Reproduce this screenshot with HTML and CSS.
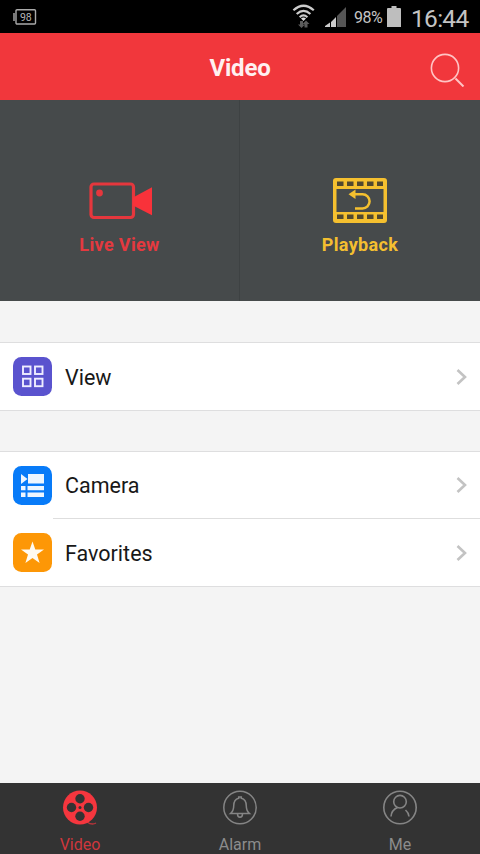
FILE: index.html
```html
<!DOCTYPE html>
<html lang="en">
<head>
<meta charset="utf-8">
<title>Video</title>
<link rel="stylesheet" href="styles.css">
</head>
<body>
<div class="status">
  <svg class="battery-left" width="24" height="18" viewBox="0 0 24 18"><rect x="3" y="1.700" width="19.500" height="14.300" rx="1" fill="none" stroke="#aaa" stroke-width="1.400"/><path d="M1 5v8" stroke="#999" stroke-width="1.600"/><text x="12.800" y="12.800" text-anchor="middle" class="tiny">98</text></svg>
  <svg class="wifi" width="24" height="26" viewBox="0 0 24 26"><g fill="none" stroke="#ccc" stroke-width="2.200"><path d="M1.400 6.300Q11.500-2.800 21.800 6.300"/><path d="M4.700 10Q11.500 3.800 18.400 10"/><path d="M7.700 13.200Q11.500 9.700 15.400 13.200"/></g><path d="M9 14.500q2.500-2 5 0L11.500 17z" fill="#ddd"/><path d="M9.500 24L6 20.500h2V17h3v3.500h2zM14 16.500l3.500 3.500h-2v3.500h-3V20h-2z" fill="#5c5c5c"/></svg>
  <svg class="signal" width="22" height="22" viewBox="0 0 22 22"><path d="M12 10l9-9v20h-9z" fill="#555"/><path d="M0 21v-1l5-3.500V21zM6 21v-5l5-5v10z" fill="#ccc"/></svg>
  <span class="percent">98%</span>
  <svg class="battery" width="14" height="22" viewBox="0 0 14 22"><path d="M4.500 0h5v2H13q1 0 1 1v18H0V3q0-1 1-1h3.500z" fill="#bebebe"/></svg>
  <span class="clock">16:44</span>
</div>
<header class="header">
  <h1>Video</h1>
  <svg class="search" width="36" height="36" viewBox="0 0 36 36"><g fill="none" stroke="#ffc4c4" stroke-width="1.600"><circle cx="16" cy="17" r="13.600"/><path d="M26.500 27.500l8 8" stroke-width="2"/></g></svg>
</header>
<section class="hero">
  <div class="tile live">
    <svg width="66" height="46" viewBox="0 0 66 46"><rect x="4" y="7" width="42.500" height="33.500" rx="3" fill="none" stroke="#e5373d" stroke-width="3.200"/><circle cx="12.500" cy="16" r="3.400" fill="#e5373d"/><path d="M46 20.500L65 10.300v28L46 28.500z" fill="#f9323a"/></svg>
    <span>Live View</span>
  </div>
  <div class="tile playback">
    <svg width="54" height="46" viewBox="0 0 54 46"><path d="M3 1h48q3 0 3 3v39q0 3-3 3H3q-3 0-3-3V4q0-3 3-3z" fill="#f5c02f"/><path d="M3.500 12h47v23h-47z" fill="#464a4b"/><path d="M4 4.500h6.500V9H4zM14 4.500h6.500V9H14zM24 4.500h6.500V9H24zM34 4.500h6.500V9H34zM44 4.500h6V9h-6zM4 37.500h6.500V42H4zM14 37.500h6.500V42H14zM24 37.500h6.500V42H24zM34 37.500h6.500V42H34zM44 37.500h6V42h-6z" fill="#51482f"/><path d="M20 17.200h9.500a7.100 7.100 0 0 1 0 14.200H22" fill="none" stroke="#f5c02f" stroke-width="2.500"/><path d="M15.500 17.200l7-4.700v9.400z" fill="#f5c02f"/></svg>
    <span>Playback</span>
  </div>
</section>
<main class="content">
  <div class="group">
    <div class="row single">
      <svg class="icon" width="39" height="39" viewBox="0 0 39 39"><rect width="39" height="39" rx="8.500" fill="#5a53ce"/><g fill="none" stroke="#eeedff" stroke-width="1.900"><rect x="10" y="9.500" width="7.500" height="7.500"/><rect x="22" y="9.500" width="7.500" height="7.500"/><rect x="10" y="21.700" width="7.500" height="7.500"/><rect x="22" y="21.700" width="7.500" height="7.500"/></g></svg>
      <div class="label">View<svg class="chevron" width="11" height="16" viewBox="0 0 11 16"><path d="M1.500 1l7.500 7-7.500 7"/></svg></div>
    </div>
  </div>
  <div class="group">
    <div class="row">
      <svg class="icon" width="39" height="39" viewBox="0 0 39 39"><rect width="39" height="39" rx="8.500" fill="#087bf8"/><path d="M8 8l6.500 5L8 18zM15 8h16v9.500H15zM8 20h4.500v4.200H8zM14.500 20H31v4.200H14.500zM8 26.500h4.500V31H8zM14.500 26.500H31V31H14.500z" fill="#edf6ff"/></svg>
      <div class="label">Camera<svg class="chevron" width="11" height="16" viewBox="0 0 11 16"><path d="M1.500 1l7.500 7-7.500 7"/></svg></div>
    </div>
    <div class="row">
      <svg class="icon" width="39" height="39" viewBox="0 0 39 39"><rect width="39" height="39" rx="8.500" fill="#fd9706"/><path d="M19.500 8.500l2.800 8H31l-7 5 2.600 8.600-7.100-5.200-7.100 5.200 2.600-8.600-7-5h8.700z" fill="#fffaf0"/></svg>
      <div class="label">Favorites<svg class="chevron" width="11" height="16" viewBox="0 0 11 16"><path d="M1.500 1l7.500 7-7.500 7"/></svg></div>
    </div>
  </div>
</main>
<nav class="tabs">
  <div class="tab active">
    <svg width="36" height="36" viewBox="0 0 36 36"><path d="M25 32q5 3.500 9 1" fill="none" stroke="#b8343a" stroke-width="1.400"/><circle cx="18" cy="17.500" r="17" fill="#f5363e"/><g fill="#333"><circle cx="18" cy="8.700" r="4.700"/><circle cx="9.500" cy="17.500" r="4.700"/><circle cx="26.500" cy="17.500" r="4.700"/><circle cx="18" cy="26.300" r="4.700"/><circle cx="18" cy="17.500" r="1.500"/></g></svg>
    <span>Video</span>
  </div>
  <div class="tab">
    <svg width="36" height="36" viewBox="0 0 36 36"><g fill="none" stroke="#858585" stroke-width="1.500"><circle cx="18" cy="17.500" r="16.200"/><path d="M8.500 23.500q3.200-2.700 3.200-7.500c0-4 2-7 5-7.700V7h2.600v1.300c3 .7 5 3.700 5 7.700q0 4.800 3.200 7.500zM15.500 24q0 3.200 2.500 3.200t2.500-3.200"/></g></svg>
    <span>Alarm</span>
  </div>
  <div class="tab">
    <svg width="36" height="36" viewBox="0 0 36 36"><g fill="none" stroke="#858585" stroke-width="1.600"><circle cx="18" cy="17.500" r="16.200"/><circle cx="18" cy="11.700" r="6.300"/><path d="M9 26.500q.5-6.500 6.500-9M23.500 20q3 2.500 3.500 6.500"/></g></svg>
    <span>Me</span>
  </div>
</nav>
</body>
</html>
```
FILE: styles.css
```css
* { box-sizing: border-box; }
body {
  margin: 0;
  height: 854px;
  display: flex;
  flex-direction: column;
  overflow: hidden;
  background: #f4f4f4;
  color: #181818;
  font-family: Roboto, sans-serif;
}
svg { display: block; flex: none; }
.status {
  height: 33px;
  flex: none;
  display: flex;
  align-items: flex-start;
  padding: 0 11px 0 13px;
  background: #000;
  color: #c4c4c4;
}
.tiny { font-size: 10.5px; fill: #b5b5b5; }
.battery-left { margin-top: 8px; }
.wifi { margin: 4px 0 0 auto; }
.signal { margin: 6px 0 0 9px; }
.percent { width: 30px; margin: 8px 0 0 7px; font-size: 16px; line-height: 20px; letter-spacing: -0.5px; }
.battery { margin: 6px 0 0 3px; }
.clock { width: 58px; margin: 5px 0 0 10px; font-size: 24.5px; line-height: 28px; letter-spacing: -0.7px; white-space: nowrap; }
.header {
  height: 67px;
  flex: none;
  display: grid;
  grid-template-columns: 1fr auto 1fr;
  align-items: center;
  padding: 0 15px;
  background: #f1373c;
}
h1 { grid-column: 2; margin: 2px 0 0; font-size: 24px; line-height: 28px; font-weight: 700; letter-spacing: -0.2px; color: #fff0f0; }
.search { justify-self: end; margin-top: 5px; }
.hero { height: 201px; flex: none; display: grid; grid-template-columns: 1fr 1fr; background: #464a4b; }
.tile { display: flex; flex-direction: column; align-items: center; padding-top: 77px; font-size: 18px; font-weight: 700; line-height: 22px; letter-spacing: 0.35px; }
.tile span { margin-top: 11px; }
.live { color: #e4393f; border-right: 1px solid #3e4243; }
.playback { color: #f4bf30; }
.content { flex: 1; }
.group { margin-top: 40px; background: #fff; border-top: 1px solid #dededf; border-bottom: 1px solid #dededf; }
.group:first-child { margin-top: 41px; }
.row { display: flex; align-items: center; height: 66px; padding-left: 13px; }
.single { height: 67px; }
.icon { margin-right: 1px; }
.label { flex: 1; height: 100%; display: flex; align-items: center; padding: 1px 13px 0 12px; font-size: 21.5px; }
.row + .row { height: 68px; }
.row + .row .label { border-top: 1px solid #dedede; }
.chevron { margin: -1px 0 0 auto; fill: none; stroke: #c3c3c3; stroke-width: 2.6; }
.tabs { height: 71px; flex: none; display: grid; grid-template-columns: repeat(3, 1fr); background: #333; color: #8c8c8c; }
.tab { display: flex; flex-direction: column; align-items: center; padding-top: 7px; font-size: 16px; line-height: 20px; }
.tab span { margin-top: 9px; }
.active { color: #cf373d; }
```
